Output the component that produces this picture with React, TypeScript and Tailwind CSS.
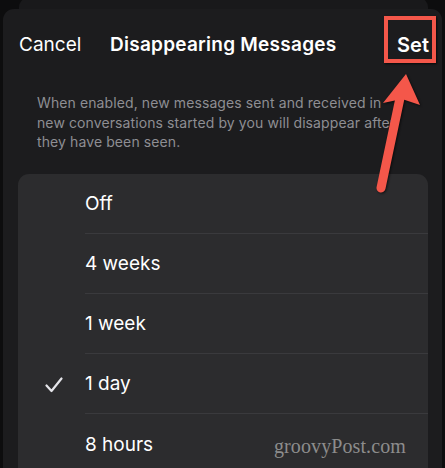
import React from 'react';

const options = ['Off', '4 weeks', '1 week', '1 day', '8 hours'];
const selected = '1 day';

function Check() {
    return (
        <svg width="18" height="16" viewBox="0 0 18 16" fill="none">
            <path d="M1.5 8.5 L6.5 14 L16.5 1.5" stroke="#e5e5ea" strokeWidth="2.2" strokeLinecap="round" strokeLinejoin="round" />
        </svg>
    );
}

function Arrow() {
    return (
        <svg className="absolute left-0 top-0 pointer-events-none" width="445" height="468" viewBox="0 0 445 468">
            <g style={{ filter: 'drop-shadow(1px 1px 1px rgba(0,0,0,0.6))' }}>
                <line x1="381" y1="188" x2="400" y2="98" stroke="#f4574a" strokeWidth="9" strokeLinecap="round" />
                <path d="M406 74 L420 105 L402 99 L383 103 Z" fill="#f4574a" />
            </g>
        </svg>
    );
}

export default function App() {
    return (
        <div className="relative w-[445px] h-[468px] bg-[#0d0d0e] overflow-hidden flex flex-col" style={{ fontFamily: 'Inter, "Noto Sans", sans-serif' }}>
            <div className="mx-[19px] w-[409px] h-[11px] rounded-t-[9px] bg-[#19191b] shrink-0 -mt-[2px] pt-[2px]" />
            <div className="ml-[3px] w-[439px] flex-1 mb-[2px] rounded-t-[11px] bg-[#1c1c1e] flex flex-col">
                <div className="h-[66px] flex items-center text-white text-[19px] pt-[6px]">
                    <span className="ml-[16px] w-[91px]">Cancel</span>
                    <span className="font-semibold tracking-[0.25px]">Disappearing Messages</span>
                    <span className="ml-auto mr-[13px] font-semibold text-[20px]">Set</span>
                </div>
                <p className="mt-[18px] ml-[34px] w-[372px] text-[14px] leading-[19.5px] text-[#8e8e93] tracking-[0.1px]">
                    When enabled, new messages sent and received in new conversations started by you will disappear after they have been seen.
                </p>
                <div className="mt-[22px] ml-[15px] w-[410px] flex-1 rounded-t-[11px] bg-[#2c2c2e] flex flex-col">
                    {options.map((o, i) => (
                        <div key={o} className="h-[60px] flex shrink-0">
                            <div className="w-[67px] flex items-center justify-center pl-[4px] pt-[3px]">
                                {o === selected && <Check />}
                            </div>
                            <div className={`flex-1 flex items-center text-white text-[19px] pt-[3px] ${i < options.length - 1 ? 'border-b border-[#3a3a3d]' : ''}`}>
                                <span>{o}</span>
                            </div>
                        </div>
                    ))}
                </div>
            </div>

            <div className="absolute left-[384px] top-[16px] w-[52px] h-[47px] border-[4px] border-[#f4574a] shadow-[1px_1px_2px_rgba(0,0,0,0.7)]" />
            <Arrow />
            <div className="absolute left-[274px] top-[431px] text-[20px] text-[#8c8c8c] tracking-[0.1px]" style={{ fontFamily: '"Liberation Serif", serif' }}>
                groovyPost.com
            </div>
        </div>
    );
}
